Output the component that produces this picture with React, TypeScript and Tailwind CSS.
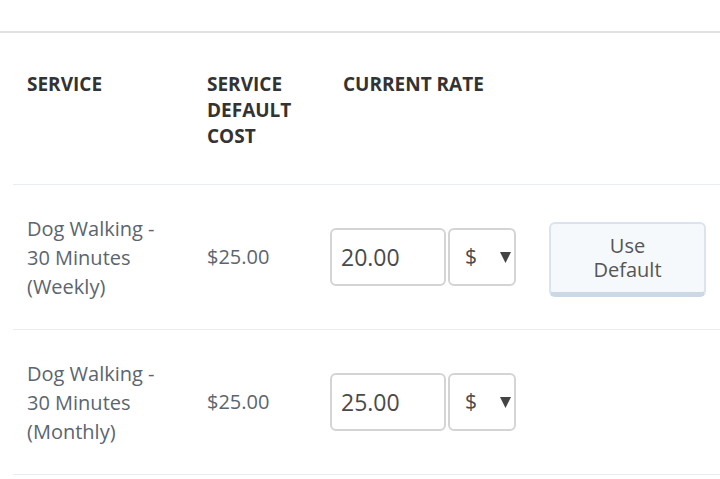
const rows = [
  { name: ["Dog Walking -", "30 Minutes", "(Weekly)"], cost: "$25.00", rate: "20.00", showDefault: true },
  { name: ["Dog Walking -", "30 Minutes", "(Monthly)"], cost: "$25.00", rate: "25.00", showDefault: false },
];

function RateInput({ value }: { value: string }) {
  return (
    <div className="flex items-center gap-[2px]">
      <div className="w-[116px] h-[58px] border-2 border-[#d4d4d4] rounded-[6px] flex items-center pl-[9px] text-[23px] text-[#4a4a4a]">
        {value}
      </div>
      <div className="w-[68px] h-[58px] border-2 border-[#d4d4d4] rounded-[6px] flex items-center pl-[15px] pr-[3px] justify-between text-[21px] text-[#4a4a4a]">
        <span>$</span>
        <svg width="11" height="11" viewBox="0 0 11 11">
          <polygon points="0,0 11,0 5.5,11" fill="#444" />
        </svg>
      </div>
    </div>
  );
}

export default function App() {
  return (
    <div className="w-[720px] h-[479px] bg-white overflow-hidden font-['Open_Sans',sans-serif]">
      <div className="h-[31px]" />
      <div className="border-t-2 border-[#e2e2e2]" />

      <div className="pl-[13px]">
        {/* Header */}
        <div className="flex pt-[38px] pb-[35px] border-b border-[#e8edf2] text-[19px] font-bold text-[#333] leading-[26px]">
          <div className="w-[194px] pl-[14px]">SERVICE</div>
          <div className="w-[136px]">
            SERVICE
            <br />
            DEFAULT
            <br />
            COST
          </div>
          <div>CURRENT RATE</div>
        </div>

        {/* Rows */}
        {rows.map((r, i) => (
          <div key={i} className="flex items-center h-[145px] border-b border-[#e8edf2]">
            <div className="w-[194px] pl-[14px] text-[20px] leading-[29px] text-[#5b6570]">
              {r.name.map((l) => (
                <div key={l}>{l}</div>
              ))}
            </div>
            <div className="w-[123px] text-[20px] text-[#5b6570]">{r.cost}</div>
            <div className="w-[219px]">
              <RateInput value={r.rate} />
            </div>
            {r.showDefault && (
              <button className="w-[157px] h-[75px] mt-[4px] bg-[#f6f9fb] border-2 border-b-[5px] border-[#dbe4ee] border-b-[#cbd8e6] rounded-[6px] text-[20px] leading-[24px] text-[#555]">
                Use
                <br />
                Default
              </button>
            )}
          </div>
        ))}
      </div>
    </div>
  );
}
